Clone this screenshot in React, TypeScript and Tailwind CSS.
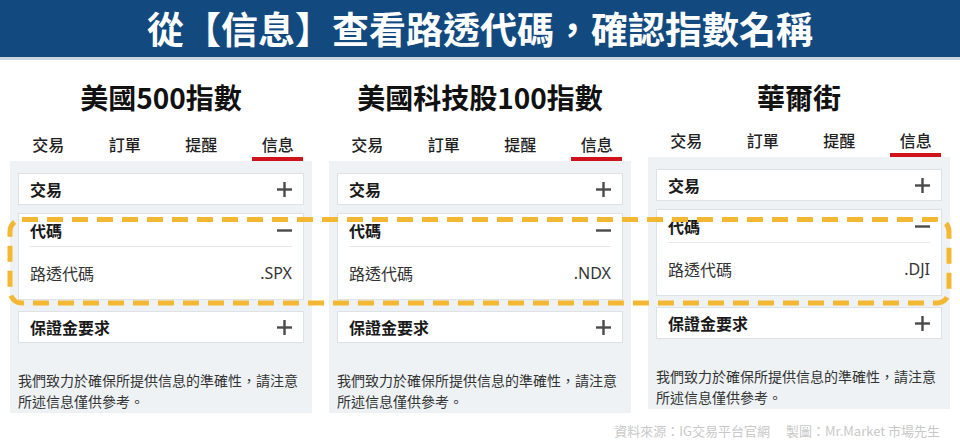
import React from "react";

const PlusIcon = () => (
  <svg width="17" height="17" viewBox="0 0 17 17" className="block">
    <line x1="8.5" y1="1" x2="8.5" y2="16" stroke="#4a4a4a" strokeWidth="2.4" />
    <line x1="1" y1="8.5" x2="16" y2="8.5" stroke="#4a4a4a" strokeWidth="2.4" />
  </svg>
);

const MinusIcon = () => (
  <svg width="17" height="17" viewBox="0 0 17 17" className="block">
    <line x1="1" y1="8.5" x2="16" y2="8.5" stroke="#4a4a4a" strokeWidth="2.4" />
  </svg>
);

type Col = { title: string; code: string; shift?: boolean };

const cols: Col[] = [
  { title: "美國500指數", code: ".SPX" },
  { title: "美國科技股100指數", code: ".NDX" },
  { title: "華爾街", code: ".DJI", shift: true },
];

const tabs = ["交易", "訂單", "提醒", "信息"];

function Column({ c }: { c: Col }) {
  return (
    <div className="w-[302px] flex flex-col">
      <div className="mt-[19px] h-[36px] leading-[36px] text-center text-[28px] font-bold text-[#111]">
        {c.title}
      </div>
      <div className={`flex w-[306px] ${c.shift ? "h-[42px]" : "h-[46px]"}`}>
        {tabs.map((t, i) => (
          <div key={t} className="w-[76.5px] flex flex-col items-center justify-end">
            <div className="text-[16px] leading-[20px] font-medium text-[#222] mb-[3px]">{t}</div>
            <div className={`h-[4px] w-[51px] ${i === 3 ? "bg-[#d0121b]" : "bg-transparent"}`} />
          </div>
        ))}
      </div>
      <div className="bg-[#eef2f5] px-[8px] pt-[12px] pb-[1px]">
        <div className="h-[32px] bg-white border border-[#dde2e7] flex items-center justify-between pl-[11px] pr-[10px]">
          <span className="text-[16px] font-semibold text-[#1a1a1a]">交易</span>
          <PlusIcon />
        </div>
        <div className="mt-[8px] bg-white border border-[#dde2e7]">
          <div className="h-[32px] flex items-center justify-between pl-[11px] pr-[10px]">
            <span className="text-[16px] font-semibold text-[#1a1a1a]">代碼</span>
            <MinusIcon />
          </div>
          <div className="mx-[11px] h-px bg-[#e6e9ec]" />
          <div className="h-[52px] flex items-center justify-between pl-[11px] pr-[11px]">
            <span className="text-[16px] text-[#333]">路透代碼</span>
            <span className="text-[16px] text-[#333] font-['Noto_Sans',sans-serif]">{c.code}</span>
          </div>
        </div>
        <div className="mt-[11px] h-[32px] bg-white border border-[#dde2e7] flex items-center justify-between pl-[11px] pr-[10px]">
          <span className="text-[16px] font-bold text-[#1a1a1a]">保證金要求</span>
          <PlusIcon />
        </div>
        <p className="mt-[27px] text-[14px] leading-[21px] text-[#333]">
          我們致力於確保所提供信息的準確性，請注意所述信息僅供參考。
        </p>
      </div>
    </div>
  );
}

export default function App() {
  return (
    <div className="relative w-[960px] h-[446px] overflow-hidden bg-white font-['Noto_Sans_CJK_TC','Noto_Sans_CJK_SC',sans-serif]">
      <div className="h-[60px] bg-[#124a80] border-b-[3px] border-[#cbd5df] flex items-center justify-center">
        <span className="text-white font-bold text-[37px] leading-none">
          從【信息】查看路透代碼，確認指數名稱
        </span>
      </div>
      <div className="flex pl-[10px] gap-[17px]">
        {cols.map((c) => (
          <Column key={c.title} c={c} />
        ))}
      </div>
      <div className="mt-[9px] pr-[20px] text-right text-[13px] leading-[18px] text-[#c8c8c8]">
        資料來源：IG交易平台官網　 製圖：Mr.Market 市場先生
      </div>
      <svg className="absolute left-0 top-0 pointer-events-none" width="960" height="446">
        <rect
          x="10"
          y="219.5"
          width="939"
          height="83.5"
          rx="12"
          fill="none"
          stroke="#f4b731"
          strokeWidth="5"
          strokeDasharray="16 9"
        />
      </svg>
    </div>
  );
}
